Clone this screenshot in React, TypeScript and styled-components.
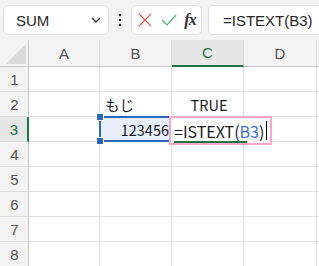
import React from 'react';
import styled, { createGlobalStyle } from 'styled-components';

const GlobalStyle = createGlobalStyle`
    html, body {
        margin: 0;
        padding: 0;
        background: #ffffff;
        overflow: hidden;
    }
    body {
        font-family: "Noto Sans CJK JP", "Noto Sans", sans-serif;
    }
`;

const Page = styled.div`
    width: 319px;
    height: 266px;
    overflow: hidden;
    background: #ffffff;
`;

const Toolbar = styled.div`
    height: 40px;
    box-sizing: border-box;
    display: flex;
    align-items: flex-start;
    padding: 5px 0 0 3px;
    background: #f3f3f3;
`;

const NameBox = styled.div`
    width: 106px;
    height: 30px;
    box-sizing: border-box;
    display: flex;
    align-items: center;
    justify-content: space-between;
    padding: 0 5px 0 12px;
    background: #ffffff;
    border: 1px solid #e0e0e0;
    border-radius: 5px;
    font-family: "Liberation Sans", Arial, sans-serif;
    font-size: 15px;
    color: #262626;
`;

const Dots = styled.div`
    width: 22px;
    height: 30px;
    display: flex;
    align-items: center;
    justify-content: center;
`;

const FuncBox = styled.div`
    width: 71px;
    height: 30px;
    box-sizing: border-box;
    display: flex;
    align-items: center;
    justify-content: space-around;
    padding: 0 2px;
    background: #ffffff;
    border: 1px solid #e0e0e0;
    border-radius: 5px;
`;

const Fx = styled.span`
    font-family: "Liberation Serif", "Times New Roman", serif;
    font-style: italic;
    font-weight: 700;
    font-size: 16px;
    color: #333333;
    letter-spacing: -1px;
`;

const FormulaInput = styled.div`
    flex: 1;
    height: 30px;
    margin-left: 6px;
    margin-right: -10px;
    box-sizing: border-box;
    display: flex;
    align-items: center;
    padding-left: 14px;
    background: #ffffff;
    border: 1px solid #e0e0e0;
    border-radius: 5px;
    font-family: "Liberation Sans", Arial, sans-serif;
    font-size: 15px;
    color: #262626;
`;

const Sheet = styled.div`
    display: grid;
    grid-template-columns: 29px 71px 72px 72px 73px 20px;
    grid-template-rows: 27px repeat(8, 25px);
`;

const Corner = styled.div`
    position: relative;
    background: #f3f3f3;
    border-right: 1px solid #c8c8c8;
    border-bottom: 1px solid #c8c8c8;
    box-sizing: border-box;
    &::after {
        content: '';
        position: absolute;
        right: 2px;
        bottom: 2px;
        width: 0;
        height: 0;
        border-left: 20px solid transparent;
        border-bottom: 20px solid #dadada;
    }
`;

const ColHead = styled.div<{ $active?: boolean }>`
    box-sizing: border-box;
    display: flex;
    align-items: center;
    justify-content: center;
    background: ${(p) => (p.$active ? '#e6e6e6' : '#f3f3f3')};
    border-right: 1px solid #dadada;
    border-bottom: ${(p) => (p.$active ? '2px solid #217346' : '1px solid #c8c8c8')};
    font-family: "Liberation Sans", Arial, sans-serif;
    font-size: 15px;
    color: ${(p) => (p.$active ? '#217346' : '#555555')};
`;

const RowHead = styled.div<{ $active?: boolean }>`
    box-sizing: border-box;
    display: flex;
    align-items: center;
    justify-content: center;
    padding-left: 1px;
    background: ${(p) => (p.$active ? '#e6e6e6' : '#f3f3f3')};
    border-right: ${(p) => (p.$active ? '2px solid #217346' : '1px solid #c8c8c8')};
    border-bottom: 1px solid #dadada;
    font-family: "Liberation Sans", Arial, sans-serif;
    font-size: 15px;
    color: ${(p) => (p.$active ? '#217346' : '#555555')};
`;

const Cell = styled.div<{ $align?: 'left' | 'center' | 'right' }>`
    position: relative;
    box-sizing: border-box;
    display: flex;
    align-items: center;
    justify-content: ${(p) =>
        p.$align === 'right' ? 'flex-end' : p.$align === 'center' ? 'center' : 'flex-start'};
    padding: 0 2px 0 5px;
    border-right: 1px solid #e1e1e1;
    border-bottom: 1px solid #e1e1e1;
    font-size: 14.5px;
    color: #1a1a1a;
    white-space: nowrap;
`;

const Selected = styled.div`
    position: absolute;
    left: -1px;
    top: -1px;
    right: -1px;
    bottom: -1px;
    border: 2px solid #2f66c0;
    background: #e8effa;
    z-index: 1;
`;

const Handle = styled.span<{ $pos: 'top' | 'bottom' }>`
    position: absolute;
    left: -4px;
    ${(p) => (p.$pos === 'top' ? 'top: -4px;' : 'bottom: -4px;')}
    width: 6px;
    height: 6px;
    background: #2f66c0;
    border: 1px solid #ffffff;
    z-index: 3;
`;

const CellText = styled.span`
    position: relative;
    z-index: 2;
`;

const EditBox = styled.div`
    position: absolute;
    left: -3px;
    top: -1px;
    width: 103px;
    height: 29px;
    box-sizing: border-box;
    border: 2px solid #f3aac6;
    background: #ffffff;
    z-index: 4;
    display: flex;
    align-items: center;
    padding-left: 3px;
    font-size: 16px;
    color: #1a1a1a;
    &::after {
        content: '';
        position: absolute;
        left: 3px;
        width: 73px;
        top: 23px;
        height: 2px;
        background: #217346;
    }
`;

const Ref = styled.span`
    color: #3d73c5;
`;

const Caret = styled.span`
    display: inline-block;
    width: 1px;
    height: 19px;
    margin-left: 2px;
    background: #000000;
`;

const rows = [1, 2, 3, 4, 5, 6, 7, 8];
const cols = ['A', 'B', 'C', 'D'];

function Grid() {
    return (
        <Sheet>
            <Corner />
            {cols.map((c) => (
                <ColHead key={c} $active={c === 'C'}>
                    {c}
                </ColHead>
            ))}
            <ColHead />
            {rows.map((r) => (
                <React.Fragment key={r}>
                    <RowHead $active={r === 3}>{r}</RowHead>
                    {cols.map((c) => {
                        const id = `${c}${r}`;
                        if (id === 'B2') return <Cell key={id}>もじ</Cell>;
                        if (id === 'C2')
                            return (
                                <Cell key={id} $align="center">
                                    TRUE
                                </Cell>
                            );
                        if (id === 'B3')
                            return (
                                <Cell key={id} $align="right">
                                    <Selected />
                                    <Handle $pos="top" />
                                    <Handle $pos="bottom" />
                                    <CellText>123456</CellText>
                                </Cell>
                            );
                        if (id === 'C3')
                            return (
                                <Cell key={id}>
                                    <EditBox>
                                        =ISTEXT(<Ref>B3</Ref>)<Caret />
                                    </EditBox>
                                </Cell>
                            );
                        return <Cell key={id} />;
                    })}
                    <Cell />
                </React.Fragment>
            ))}
        </Sheet>
    );
}

export default function App() {
    return (
        <Page>
            <GlobalStyle />
            <Toolbar>
                <NameBox>
                    SUM
                    <svg width="14" height="14" viewBox="0 0 14 14">
                        <path d="M3 5 L7 9 L11 5" fill="none" stroke="#333" strokeWidth="1.3" />
                    </svg>
                </NameBox>
                <Dots>
                    <svg width="4" height="14" viewBox="0 0 4 14">
                        <circle cx="2" cy="2" r="1.2" fill="#333" />
                        <circle cx="2" cy="7" r="1.2" fill="#333" />
                        <circle cx="2" cy="12" r="1.2" fill="#333" />
                    </svg>
                </Dots>
                <FuncBox>
                    <svg width="16" height="16" viewBox="0 0 16 16">
                        <path d="M2 2 L14 14 M14 2 L2 14" stroke="#e0575b" strokeWidth="1.2" />
                    </svg>
                    <svg width="18" height="16" viewBox="0 0 18 16">
                        <path d="M2 8 L7 13 L16 3" fill="none" stroke="#4caf6b" strokeWidth="1.2" />
                    </svg>
                    <Fx>fx</Fx>
                </FuncBox>
                <FormulaInput>=ISTEXT(B3)</FormulaInput>
            </Toolbar>
            <Grid />
        </Page>
    );
}
